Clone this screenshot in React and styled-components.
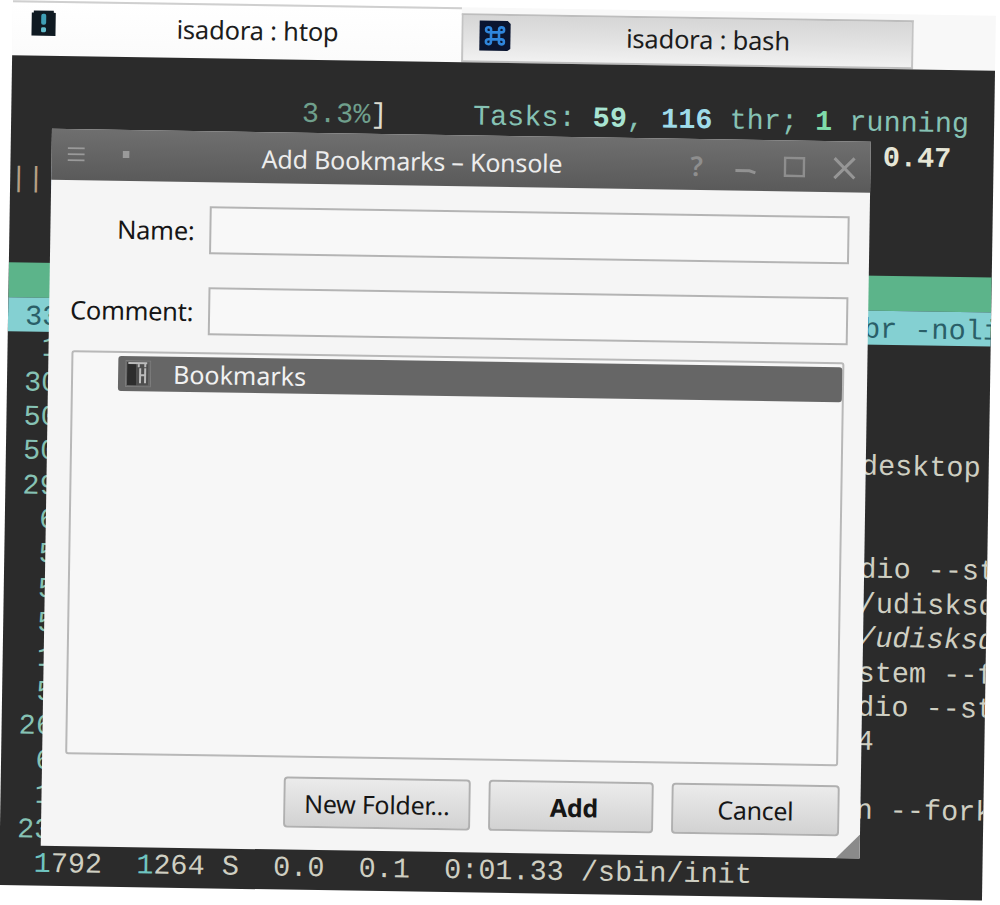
import React from "react";
import styled, { createGlobalStyle } from "styled-components";

const Global = createGlobalStyle`
  html, body { margin: 0; padding: 0; background: #ffffff; overflow: hidden; }
  #root { width: 1000px; height: 905px; overflow: hidden; }
`;

const Stage = styled.div`
  width: 1000px;
  height: 905px;
  padding-left: 13px;
  box-sizing: border-box;
  transform: rotate(0.9deg);
  transform-origin: 0 0;
  font-family: "Noto Sans", "Open Sans", sans-serif;
`;

const TabBar = styled.div`
  display: flex;
  align-items: flex-end;
  width: 983px;
  height: 55px;
  background: #f8f8f8;
  box-sizing: border-box;
`;

const Tab = styled.div`
  position: relative;
  display: flex;
  align-items: center;
  height: ${(p) => (p.$active ? 55 : 49)}px;
  width: ${(p) => (p.$active ? 449 : 452)}px;
  box-sizing: border-box;
  padding-left: ${(p) => (p.$active ? 18 : 15)}px;
  border-top: 2px solid ${(p) => (p.$active ? "#cfcfcf" : "#bdbdbd")};
  border-right: ${(p) => (p.$active ? "none" : "2px solid #c4c4c4")};
  border-left: ${(p) => (p.$active ? "none" : "2px solid #c4c4c4")};
  border-bottom: ${(p) => (p.$active ? "none" : "2px solid #bdbdbd")};
  background: ${(p) =>
    p.$active
      ? "linear-gradient(#ffffff, #fbfbfb)"
      : "linear-gradient(#d6d6d6, #e2e2e2 50%, #f1f1f1)"};
`;

const TabIcon = styled.svg`
  flex: none;
  width: ${(p) => p.$w}px;
  height: ${(p) => p.$h}px;
  margin-top: ${(p) => p.$top}px;
`;

const TabTitle = styled.span`
  position: absolute;
  left: 41px;
  right: 0;
  top: ${(p) => p.$top}px;
  text-align: center;
  font-size: 25.5px;
  line-height: 34px;
  letter-spacing: -0.2px;
  color: #1c1c1c;
`;

const Terminal = styled.div`
  position: relative;
  width: 983px;
  height: 830px;
  box-sizing: border-box;
  padding-top: 1px;
  background: #2b2b2b;
  overflow: hidden;
`;

const TermRow = styled.div`
  height: 34.4px;
  line-height: 39.4px;
  white-space: pre;
  font-family: "Liberation Mono", monospace;
  font-size: 28.5px;
  color: #86c2b4;
  background: ${(p) => p.$bg || "transparent"};
`;

const Seg = styled.span`
  color: ${(p) => p.$c};
  font-weight: ${(p) => (p.$b ? 700 : 400)};
  font-style: ${(p) => (p.$i ? "italic" : "normal")};
`;

const ProcId = styled.span`
  position: relative;
  top: -3px;
`;

const Dialog = styled.div`
  position: absolute;
  left: 41px;
  top: 73px;
  width: 819px;
  height: 717px;
  display: flex;
  flex-direction: column;
  background: #f5f5f5;
`;

const TitleBar = styled.div`
  position: relative;
  flex: none;
  height: 51px;
  display: flex;
  align-items: center;
  background: linear-gradient(#6f6f6f, #5a5a5a);
`;

const TitleIcon = styled.svg`
  position: absolute;
  left: ${(p) => p.$x}px;
  top: ${(p) => p.$y}px;
`;

const TitleText = styled.span`
  flex: 1;
  padding-right: 98px;
  text-align: center;
  font-size: 25px;
  letter-spacing: -0.2px;
  color: #ececec;
`;

const Help = styled.span`
  position: absolute;
  left: 639px;
  top: 8px;
  font-size: 27px;
  line-height: 37px;
  font-weight: 600;
  color: #8e8e8e;
`;

const Body = styled.div`
  flex: 1;
  min-height: 0;
  display: flex;
  flex-direction: column;
  padding: 24px 20px 22px 0;
`;

const FormRow = styled.label`
  display: grid;
  grid-template-columns: 144px 1fr;
  column-gap: 15px;
  align-items: center;
  margin-bottom: ${(p) => p.$gap}px;
`;

const FieldLabel = styled.span`
  text-align: right;
  font-size: 25.5px;
  letter-spacing: -0.3px;
  color: #161616;
`;

const Field = styled.div`
  height: 48px;
  box-sizing: border-box;
  background: #f8f8f8;
  border: 2px solid #b4b4b4;
`;

const Tree = styled.div`
  flex: 1;
  min-height: 0;
  margin: 0 3px 0 23px;
  box-sizing: border-box;
  padding: 3px 0 0 45px;
  background: #f7f7f7;
  border: 2px solid #b8b8b8;
  border-radius: 3px;
`;

const TreeItem = styled.div`
  height: 35px;
  display: flex;
  align-items: center;
  gap: 22px;
  padding-left: 7px;
  background: #666666;
  border-radius: 3px;
  font-size: 25px;
  line-height: 31px;
  color: #f1f1f1;
`;

const Actions = styled.div`
  flex: none;
  display: flex;
  justify-content: flex-end;
  gap: 18px;
  margin: 19px 1px 0 0;
`;

const Btn = styled.button`
  width: ${(p) => p.$w}px;
  height: 51px;
  padding: 0 0 0 ${(p) => (p.$primary ? 6 : 0)}px;
  border: 2px solid #b0b0b0;
  border-radius: 4px;
  background: linear-gradient(#ebebeb, #d2d2d2);
  font-family: inherit;
  font-size: 25px;
  letter-spacing: -0.3px;
  font-weight: ${(p) => (p.$primary ? 700 : 400)};
  color: #161616;
`;

const Grip = styled.svg`
  position: absolute;
  right: 0;
  bottom: 0;
`;

const sp = (n) => " ".repeat(n);
const TEAL = "#86c2b4";
const LIGHT = "#cfcfc2";

const leftRows = {
  8: "  1", 9: " 30", 10: " 50", 11: " 50", 12: " 29", 13: "  6", 14: "  5", 15: "  5",
  16: "  5", 17: "  1", 18: "  5", 19: " 26", 20: "  6", 21: "  1", 22: " 23",
};

const rightRows = {
  11: { t: "desktop", c: LIGHT },
  14: { t: "dio --start", c: LIGHT },
  15: { t: "/udisksd --no", c: LIGHT },
  16: { t: "/udisksd --no", c: LIGHT, i: true },
  17: { t: "stem --fork", c: LIGHT },
  18: { t: "dio --start", c: LIGHT },
  19: { t: "4", c: LIGHT },
  21: { t: "n --fork", c: LIGHT },
};

function BodyRow({ i }) {
  const left = leftRows[i];
  const right = rightRows[i];
  return (
    <TermRow>
      <ProcId>{left}</ProcId>
      {right && (
        <Seg $c={right.c} $i={right.i}>
          {sp(50 - left.length)}
          {right.t}
        </Seg>
      )}
    </TermRow>
  );
}

export default function App() {
  return (
    <Stage>
      <Global />
      <TabBar>
        <Tab $active>
          <TabIcon $w={26} $h={27} $top={-13} viewBox="0 0 26 27">
            <path d="M1 3h2V1h20v2h2v23H1z" fill="#0f1a22" />
            <rect x="10.500" y="4" width="5" height="11" rx="2" fill="#3f9fb5" />
            <rect x="10.500" y="17.500" width="5" height="5" rx="1.500" fill="#63bccb" />
          </TabIcon>
          <TabTitle $top={7}>isadora : htop</TabTitle>
        </Tab>
        <Tab>
          <TabIcon $w={33} $h={32} $top={-6} viewBox="0 0 33 32">
            <path d="M1 1h28l3 3v25l-3 2H1z" fill="#0a1530" />
            <path
              d="M12.500 12.500h8v7h-8zM12.500 12.500h-2.500a2.500 2.500 0 1 1 2.500-2.500zM20.500 12.500v-2.500a2.500 2.500 0 1 1 2.500 2.500zM20.500 19.500h2.500a2.500 2.500 0 1 1-2.500 2.500zM12.500 19.500v2.500a2.500 2.500 0 1 1-2.500-2.500z"
              fill="none"
              stroke="#2f86dc"
              strokeWidth="2.600"
            />
          </TabIcon>
          <TabTitle $top={3}>isadora : bash</TabTitle>
        </Tab>
      </TabBar>
      <Terminal>
        <TermRow />
        <TermRow>
          {sp(17)}
          <Seg $c="#6f9f8c">3.3%</Seg>
          <Seg $c="#dcdcd0">]</Seg>
          {sp(5)}
          <Seg $c={TEAL}>Tasks: </Seg>
          <Seg $c="#a8e4d2" $b>59</Seg>
          <Seg $c={TEAL}>, </Seg>
          <Seg $c="#9fdcea" $b>116</Seg>
          <Seg $c={TEAL}> thr; </Seg>
          <Seg $c="#7fdcaa" $b>1</Seg>
          <Seg $c={TEAL}> running</Seg>
        </TermRow>
        <TermRow>
          {sp(51)}
          <Seg $c="#e6e6d6" $b>0.47</Seg>
        </TermRow>
        <TermRow>
          <Seg $c="#b59f84">||</Seg>
          <Seg $c="#5f9f9f">|</Seg>
        </TermRow>
        <TermRow />
        <TermRow />
        <TermRow $bg="#5cb48a" />
        <TermRow $bg="#84d0d2">
          <Seg $c="#2a5f68">
            {" 33"}
            {sp(47)}
            br -nolisten
          </Seg>
        </TermRow>
        {Array.from({ length: 15 }, (_, k) => (
          <BodyRow key={k} i={k + 8} />
        ))}
        <TermRow>
          <ProcId>
            {"  "}
            <Seg $c="#6fc4c0">1</Seg>
            <Seg $c={LIGHT}>792  </Seg>
            <Seg $c="#6fc4c0">1</Seg>
            <Seg $c={LIGHT}>264 S  0.0  0.1  0:01.33 /sbin/init</Seg>
          </ProcId>
        </TermRow>

        <Dialog>
          <TitleBar>
            <TitleIcon $x={16} $y={17} width="18" height="16" viewBox="0 0 18 16">
              <path d="M0 2h17M0 8h17M0 14h17" stroke="#9a9a9a" strokeWidth="1.600" />
            </TitleIcon>
            <TitleIcon $x={71} $y={21} width="7" height="7" viewBox="0 0 7 7">
              <rect width="7" height="7" fill="#9a9a9a" />
            </TitleIcon>
            <TitleText>Add Bookmarks – Konsole</TitleText>
            <Help>?</Help>
            <TitleIcon $x={683} $y={26} width="22" height="12" viewBox="0 0 22 12">
              <path d="M1 5h14l6 2" fill="none" stroke="#929292" strokeWidth="3" />
            </TitleIcon>
            <TitleIcon $x={732} $y={16} width="22" height="21" viewBox="0 0 22 21">
              <path d="M1.500 1.500h19v18h-19z" fill="none" stroke="#8e8e8e" strokeWidth="2.500" />
            </TitleIcon>
            <TitleIcon $x={781} $y={15} width="24" height="24" viewBox="0 0 24 24">
              <path d="M2 2l20 20M22 2L2 22" stroke="#969696" strokeWidth="3" />
            </TitleIcon>
          </TitleBar>
          <Body>
            <FormRow $gap={33}>
              <FieldLabel>Name:</FieldLabel>
              <Field />
            </FormRow>
            <FormRow $gap={17}>
              <FieldLabel>Comment:</FieldLabel>
              <Field />
            </FormRow>
            <Tree>
              <TreeItem>
                <svg width="26" height="27" viewBox="0 0 26 27">
                  <rect x="0.500" y="0.500" width="25" height="26" fill="none" stroke="#7d7d7d" strokeWidth="1" />
                  <rect x="2" y="2" width="9" height="23" fill="#2d2d2d" />
                  <rect x="11" y="2" width="12" height="23" fill="#4e4e4e" />
                  <path d="M13.500 4v3M20 4v3M15 8v15M20 8v15M15 15h5M3 3h19" stroke="#bcbcbc" strokeWidth="2" />
                </svg>
                Bookmarks
              </TreeItem>
            </Tree>
            <Actions>
              <Btn $w={187}>New Folder...</Btn>
              <Btn $w={165} $primary>Add</Btn>
              <Btn $w={168}>Cancel</Btn>
            </Actions>
          </Body>
          <Grip width="24" height="24" viewBox="0 0 24 24">
            <path d="M24 0v24H0z" fill="#8a8a8a" />
          </Grip>
        </Dialog>
      </Terminal>
    </Stage>
  );
}
